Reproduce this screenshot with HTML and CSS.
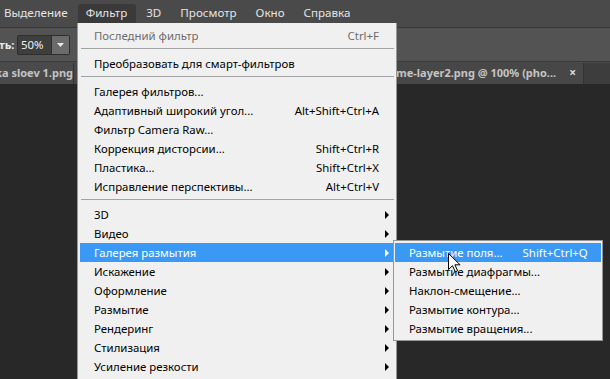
FILE: index.html
```
<!DOCTYPE html>
<html lang="ru">
<head>
    <meta charset="UTF-8">
    <title>Фильтр</title>
    <link rel="stylesheet" href="styles.css">
</head>
<body>

    <div class="app">

        <div class="menubar">
            <span class="mb-item first">Выделение</span>
            <span class="mb-item active">Фильтр</span>
            <span class="mb-item">3D</span>
            <span class="mb-item">Просмотр</span>
            <span class="mb-item">Окно</span>
            <span class="mb-item">Справка</span>
        </div>

        <div class="options">
            <span class="opt-label">ть:</span>
            <div class="select">
                <span class="select-val">50%</span>
                <span class="select-btn">
                    <svg width="7" height="4" viewBox="0 0 7 4"><path d="M0 0h7L3.5 4z" fill="#e8e8e8"/></svg>
                </span>
            </div>
        </div>

        <div class="tabs">
            <div class="tab">ka sloev 1.png</div>
            <div class="tab tab2">
                <span>rame-layer2.png @ 100% (pho...</span>
                <span class="close">×</span>
            </div>
        </div>

        <div class="doc"></div>

        <!-- dropdown of "Фильтр" -->
        <div class="menu">
            <div class="row disabled"><span>Последний фильтр</span><span class="key">Ctrl+F</span></div>
            <div class="sep"></div>
            <div class="row"><span>Преобразовать для смарт-фильтров</span></div>
            <div class="sep"></div>
            <div class="row"><span>Галерея фильтров...</span></div>
            <div class="row"><span>Адаптивный широкий угол...</span><span class="key">Alt+Shift+Ctrl+A</span></div>
            <div class="row"><span>Фильтр Camera Raw...</span></div>
            <div class="row"><span>Коррекция дисторсии...</span><span class="key">Shift+Ctrl+R</span></div>
            <div class="row"><span>Пластика...</span><span class="key">Shift+Ctrl+X</span></div>
            <div class="row"><span>Исправление перспективы...</span><span class="key">Alt+Ctrl+V</span></div>
            <div class="sep"></div>
            <div class="row sub"><span>3D</span><i class="arrow"></i></div>
            <div class="row sub"><span>Видео</span><i class="arrow"></i></div>
            <div class="row sub hl"><span>Галерея размытия</span><i class="arrow"></i></div>
            <div class="row sub"><span>Искажение</span><i class="arrow"></i></div>
            <div class="row sub"><span>Оформление</span><i class="arrow"></i></div>
            <div class="row sub"><span>Размытие</span><i class="arrow"></i></div>
            <div class="row sub"><span>Рендеринг</span><i class="arrow"></i></div>
            <div class="row sub"><span>Стилизация</span><i class="arrow"></i></div>
            <div class="row sub"><span>Усиление резкости</span><i class="arrow"></i></div>
        </div>

        <div class="submenu">
            <div class="row hl"><span>Размытие поля...</span><span class="key">Shift+Ctrl+Q</span></div>
            <div class="row"><span>Размытие диафрагмы...</span></div>
            <div class="row"><span>Наклон-смещение...</span></div>
            <div class="row"><span>Размытие контура...</span></div>
            <div class="row"><span>Размытие вращения...</span></div>
        </div>

        <svg class="cursor" width="13" height="20" viewBox="0 0 13 20">
            <path d="M0.5 0.5V16.5L4.5 12.7L7.3 18.8L9.6 17.8L6.9 11.8H12.1Z" fill="#fff" stroke="#000" stroke-width="1" stroke-linejoin="miter"/>
        </svg>

    </div>

</body>
</html>
```

FILE: styles.css
```
body{
    margin: 0px;
    background: #282828;
    font-family: 'Noto Sans', 'Open Sans', sans-serif;
    font-size: 11.4px;
}

.app{
    position: relative;
    width: 610px;
    height: 379px;
    overflow: hidden;
    display: flex;
    flex-direction: column;
}

/* top bar */
.menubar{
    height: 27px;
    background: #4a4a4a;
    border-bottom: 1px solid #363636;
    display: flex;
    align-items: flex-end;
    color: #e4e4e4;
    font-size: 11.6px;
}

.mb-item{
    height: 19px;
    line-height: 18px;
    padding: 0 9px 0 8px;
    margin-right: 2px;
    margin-bottom: 4px;
    border-radius: 3px 3px 0 0;
}

.mb-item.first{
    margin-left: -4px;
    margin-right: 1px;
}

.mb-item.active{
    background: #3a3a3a;
    height: 23px;
    margin-bottom: 0px;
}

.options{
    height: 33px;
    background: #535353;
    border-bottom: 1px solid #3a3a3a;
    display: flex;
    align-items: center;
    color: #e8e8e8;
}

.opt-label{
    font-weight: bold;
    width: 18px;
    margin-left: -1px;
}

.select{
    display: flex;
    height: 18px;
    width: 51px;
    border: 1px solid #2e2e2e;
    background: #3e3e3e;
    border-radius: 2px;
    margin-top: 1px;
}

.select-val{
    flex: 1;
    line-height: 18px;
    padding-left: 3px;
    color: #f0f0f0;
}

.select-btn{
    width: 17px;
    background: #6b6b6b;
    border-left: 1px solid #2e2e2e;
    display: flex;
    align-items: center;
    justify-content: center;
}

.tabs{
    height: 21px;
    background: #3d3d3d;
    border-top: 1px solid #4a4a4a;
    display: flex;
    color: #c4c4c4;
    font-weight: bold;
    font-size: 11px;
}

.tab{
    background: #4a4a4a;
    line-height: 20px;
    white-space: nowrap;
    overflow: hidden;
    border-right: 1px solid #333;
}

.tab:first-child{
    width: 73px;
    display: flex;
    justify-content: flex-end;
}

.tab2{
    width: 510px;
    display: flex;
    justify-content: flex-end;
    padding-right: 7px;
    box-sizing: border-box;
    background: #474747;
}

.close{
    margin-left: 13px;
    font-size: 12px;
    color: #dcdcdc;
}

.doc{
    flex: 1;
    background: #282828;
}

/* dropdown menus */
.menu, .submenu{
    position: absolute;
    background: #f0f0f0;
    border: 1px solid #979797;
    box-sizing: border-box;
    color: #000;
}

.menu{
    left: 77px;
    top: 23px;
    width: 320px;
    height: 370px;
    padding: 2px 1px 0 2px;
    border-top: none;
}

.submenu{
    left: 393px;
    top: 240px;
    width: 210px;
    padding: 2px 1px 2px 1px;
}

.row{
    height: 19px;
    display: flex;
    align-items: center;
    justify-content: space-between;
    padding-left: 14px;
    padding-right: 16px;
    white-space: nowrap;
}

.menu .row:first-child{
    margin-top: 1px;
}

.submenu .row{
    padding-left: 14px;
    padding-right: 21px;
}

.row.disabled{
    color: #6d6d6d;
}

.key{
    padding-left: 20px;
}

.row.sub{
    padding-right: 6px;
}

.arrow{
    width: 0;
    height: 0;
    border-top: 4px solid transparent;
    border-bottom: 4px solid transparent;
    border-left: 4px solid #000;
}

.row.hl{
    background: #3a99f5;
    color: #fff;
}

.row.hl .arrow{
    border-left-color: #fff;
}

.sep{
    height: 1px;
    background: #a3a3a3;
    margin: 3px 1px 5px 1px;
}

.cursor{
    position: absolute;
    left: 448px;
    top: 253px;
}
```
